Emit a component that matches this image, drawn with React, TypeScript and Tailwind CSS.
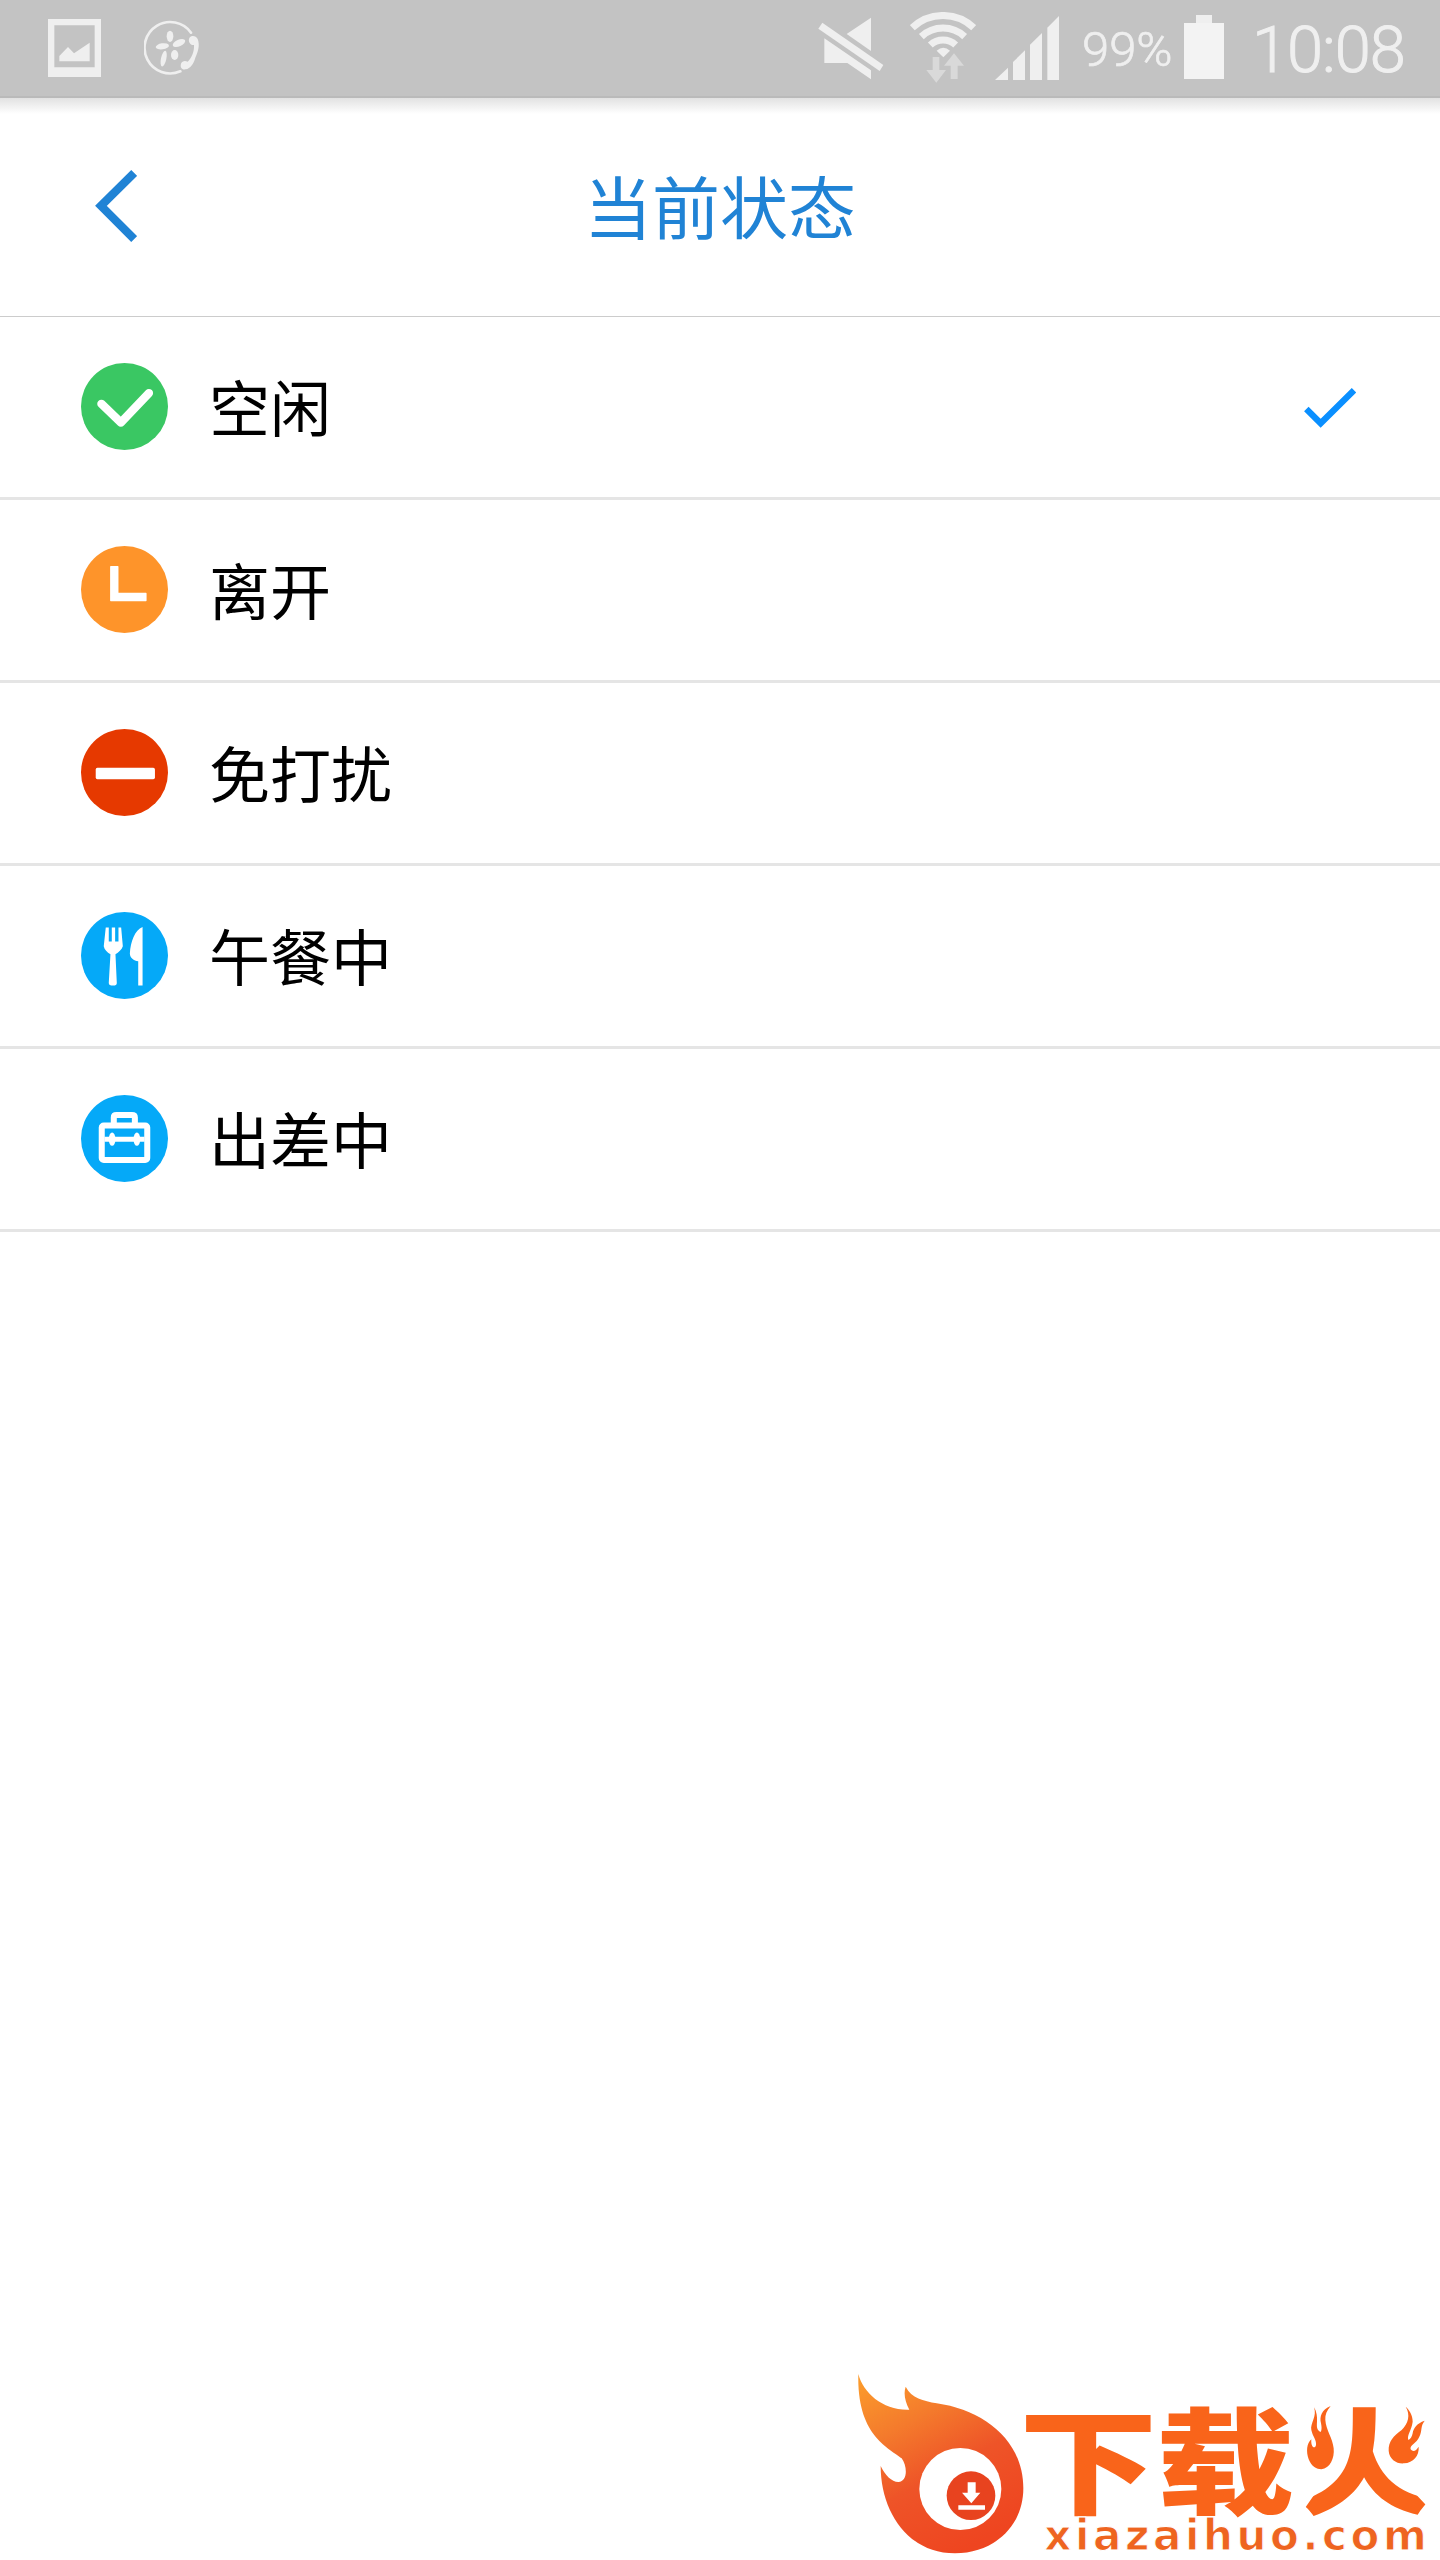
import React, { useState } from 'react'
import clsx from 'clsx'

interface StatusOption {
  id: string
  label: string
  icon: React.ReactNode
}

const FreeIcon = () => (
  <svg viewBox="0 0 260 260" className="size-[87px]">
    <circle cx="130" cy="130" r="130" fill="#3ac763" />
    <path d="M61 122L119 178L203 90" fill="none" stroke="#fff" strokeWidth="25" strokeLinecap="round" strokeLinejoin="round" />
  </svg>
)

const AwayIcon = () => (
  <svg viewBox="0 0 260 260" className="size-[87px]">
    <circle cx="130" cy="130" r="130" fill="#fe942a" />
    <path d="M89 60H110Q112 60 112 62V140H194Q196 140 196 142V163Q196 165 194 165H89Q87 165 87 163V62Q87 60 89 60Z" fill="#fff" />
  </svg>
)

const DoNotDisturbIcon = () => (
  <svg viewBox="0 0 260 260" className="size-[87px]">
    <circle cx="130" cy="130" r="130" fill="#e63900" />
    <rect x="44" y="116" width="177" height="34" rx="5" fill="#fff" />
  </svg>
)

const LunchIcon = () => (
  <svg viewBox="0 0 260 260" className="size-[87px]">
    <circle cx="130" cy="130" r="130" fill="#05a9f8" />
    <path
      d="M74 46H83V88H92V46H102V88H112V46H120L125 102C122 112 112 120 103 126L107 212Q107 220 96 220Q83 220 83 212L88 126C78 120 70 112 68 102Z"
      fill="#fff"
    />
    <path d="M184 45V220H171V147C158 147 146 136 146 124C148 89 161 54 184 45Z" fill="#fff" />
  </svg>
)

const TripIcon = () => (
  <svg viewBox="0 0 260 260" className="size-[87px]">
    <circle cx="130" cy="130" r="130" fill="#05a9f8" />
    <g fill="none" stroke="#fff" strokeWidth="18">
      <rect x="62" y="91" width="136" height="103" rx="6" />
      <path d="M98 88V67Q98 60 106 60H152Q161 60 161 67V88" />
      <path d="M70 132H190" strokeWidth="15" />
    </g>
    <ellipse cx="93" cy="132" rx="10" ry="20" fill="#fff" />
    <ellipse cx="167" cy="132" rx="10" ry="20" fill="#fff" />
  </svg>
)

const options: StatusOption[] = [
  { id: 'free', label: '空闲', icon: <FreeIcon /> },
  { id: 'away', label: '离开', icon: <AwayIcon /> },
  { id: 'dnd', label: '免打扰', icon: <DoNotDisturbIcon /> },
  { id: 'lunch', label: '午餐中', icon: <LunchIcon /> },
  { id: 'trip', label: '出差中', icon: <TripIcon /> },
]

const StatusBar = () => (
  <div className="flex h-[98px] shrink-0 items-start border-b-2 border-[#bababa] bg-[#c3c3c3] pr-[36px] pl-[48px] font-['Roboto',sans-serif] font-light text-[#efefef]">
    {/* screenshot notification */}
    <svg viewBox="144 57 159 174" className="mt-[19px] h-[58px] w-[53px]" fill="#efefef">
      <path d="M144 57H303V231H144ZM163 76V202H284V76Z" fillRule="evenodd" />
      <path d="M178 184V168L204 141L222 160L269 128V184Z" />
    </svg>
    {/* call app notification */}
    <svg viewBox="432 60 168 168" className="mt-[20px] ml-[43px] size-[56px]" fill="#efefef">
      <path d="M573 98A77 77 0 1 0 541 214" fill="none" stroke="#efefef" strokeWidth="8" strokeLinecap="round" />
      <ellipse cx="510" cy="109" rx="10" ry="17" />
      <ellipse cx="537" cy="129" rx="20" ry="10" transform="rotate(-24 537 129)" />
      <ellipse cx="487" cy="139" rx="20" ry="9" transform="rotate(-8 487 139)" />
      <ellipse cx="524" cy="165" rx="11" ry="15" />
      <ellipse cx="491" cy="176" rx="8" ry="24" transform="rotate(12 491 176)" />
      <path d="M568 114C574 105 588 107 593 117C600 135 595 153 586 173C581 192 571 205 557 208C545 210 540 202 543 191C546 182 556 181 563 185C575 174 583 155 582 135C572 137 563 125 568 114Z" />
    </svg>

    <svg viewBox="54 51 198 189" className="mt-[17px] ml-auto h-[63px] w-[66px]" fill="#efefef">
      <path d="M67 68L250 195L239 213L55 86Z" />
      <path d="M213 53V153L140 102Z" />
      <path d="M73 115L213 211V238L142 189H73Z" />
    </svg>
    <svg viewBox="330 36 198 213" className="mt-[12px] ml-[26px] h-[71px] w-[66px]" fill="none" stroke="#efefef">
      <path d="M337 83A134 134 0 0 1 521 83" strokeWidth="21" />
      <path d="M364 110A95 95 0 0 1 494 110" strokeWidth="21" />
      <path d="M391 135A56 56 0 0 1 467 135" strokeWidth="21" />
      <path d="M410 152Q430 134 450 152L430 172Z" fill="#efefef" stroke="none" />
      <path d="M398 171H418V210H438L409 248L379 210H398Z" fill="#d9d9d9" stroke="none" />
      <path d="M462 160L492 197H473V237H452V197H432Z" fill="#d9d9d9" stroke="none" />
    </svg>
    <svg viewBox="585 48 192 192" className="mt-[16px] ml-[19px] size-[64px]" fill="#efefef">
      <path d="M585 240L624 203V240Z" />
      <path d="M639 186L675 151V240H639Z" />
      <path d="M690 134L726 99V240H690Z" />
      <path d="M742 83L777 48V240H742Z" />
    </svg>
    <span className="mt-[25px] ml-[23px] w-[90px] text-[49px] leading-none whitespace-nowrap [-webkit-text-stroke:0.7px_#efefef]">99%</span>
    <svg viewBox="0 0 40 64" className="mt-[15px] ml-[12px] h-[64px] w-[40px]">
      <rect x="12" width="16" height="9" fill="#efefef" />
      <rect y="8" width="40" height="56" fill="#f3f3f3" />
    </svg>
    <span className="mt-[18px] ml-[28px] w-[152px] flex-none text-[65px] leading-none tracking-[-1px] whitespace-nowrap [-webkit-text-stroke:1px_#efefef]">10:08</span>
  </div>
)

const Header = () => (
  <header className="flex h-[219px] shrink-0 items-center border-b border-[#cccccc] bg-linear-to-b from-[#e2e2e2] to-white to-[16px] px-[95px] pb-[3px]">
    <button className="w-[42px]">
      <svg viewBox="105 90 126 216" className="h-[72px] w-[42px]">
        <path d="M222.500 99L123 197.500L222.500 297" fill="none" stroke="#2083d5" strokeWidth="25" />
      </svg>
    </button>
    <h1 className="flex-1 pb-[2px] text-center text-[68px] leading-none text-[#2083d5]">当前状态</h1>
    <div className="w-[42px]" />
  </header>
)

const SiteLogo = () => (
  <svg viewBox="0 0 1800 600" className="h-[200px] w-[600px]">
    <defs>
      <linearGradient id="flame" x1="0.1" y1="0" x2="0.6" y2="1">
        <stop offset="0" stopColor="#fb9a2c" />
        <stop offset="0.3" stopColor="#f47a2c" />
        <stop offset="0.6" stopColor="#ee5428" />
        <stop offset="1" stopColor="#ee4520" />
      </linearGradient>
      <clipPath id="fireStem">
        <path d="M1530 120H1622V290L1800 480H1370L1530 250Z" />
      </clipPath>
    </defs>
    <path
      d="M55 42C70 100 130 152 208 149C195 125 190 100 197 80C215 115 250 122 290 130C430 150 550 240 550 385C550 500 460 580 345 580C200 580 122 450 122 318C135 345 155 366 175 366C203 364 203 320 185 295C150 265 50 230 55 42Z"
      fill="url(#flame)"
    />
    <circle cx="361" cy="387" r="123" fill="#fff" />
    <circle cx="393" cy="407" r="73" fill="#e8431f" />
    <path d="M383 367H407V398H421L394 430L366 398H383ZM355 436H435V449H355Z" fill="#fff" />

    <g fill="#f9641a" fontFamily="'Noto Sans CJK SC', sans-serif" fontWeight="900" fontSize="345">
      <text transform="translate(538 435) scale(1.2 1)">下</text>
      <text transform="translate(949 435) scale(1.2 1)">载</text>
      <g clipPath="url(#fireStem)">
        <text transform="translate(1367 435) scale(1.2 1)">火</text>
      </g>
      <g transform="translate(540 60)">
        <path d="M882 82C892 110 870 130 874 150C878 170 890 180 888 195C886 207 872 205 874 178C860 190 858 215 866 238C875 260 890 268 904 268C930 266 944 235 941 205C938 175 918 150 916 120C915 105 920 92 932 78C905 88 898 110 903 130C905 140 906 150 902 156C890 150 890 140 891 125C892 110 890 95 882 82Z" />
        <path d="M1157 80C1172 105 1165 130 1145 150C1120 168 1105 185 1106 212C1108 238 1130 252 1152 250C1180 248 1198 228 1196 200C1188 212 1180 218 1172 208C1168 195 1190 190 1198 170C1208 150 1200 140 1214 122C1190 130 1180 145 1178 160C1176 170 1172 178 1165 180C1160 165 1175 150 1178 125C1178 105 1168 90 1157 80Z" />
      </g>
    </g>
    <text
      x="613"
      y="571"
      textLength="1147"
      fill="#ee6420"
      stroke="#fff"
      strokeWidth="3"
      fontFamily="'DejaVu Sans', sans-serif"
      fontWeight="700"
      fontSize="126"
    >
      xiazaihuo.com
    </text>
  </svg>
)

export default function App() {
  const [current, setCurrent] = useState('free')

  return (
    <div className="flex h-[2560px] w-[1440px] flex-col overflow-hidden bg-white font-['Noto_Sans_CJK_SC',sans-serif]">
      <StatusBar />
      <Header />
      <ul>
        {options.map((option) => (
          <li
            key={option.id}
            onClick={() => setCurrent(option.id)}
            className="flex h-[183px] items-center border-b-[3px] border-[#e5e5e5] pr-[84px] pb-px pl-[81px]"
          >
            {option.icon}
            <span className="ml-[41px] pb-[3px] text-[61px] leading-none text-black">{option.label}</span>
            <svg
              viewBox="102 84 156 120"
              className={clsx('ml-auto h-[42px] w-[52px] pt-[2px]', current !== option.id && 'invisible')}
            >
              <path d="M109 147L152 190L252 91" fill="none" stroke="#0a8fff" strokeWidth="19" />
            </svg>
          </li>
        ))}
      </ul>
      <footer className="mt-auto flex justify-end">
        <SiteLogo />
      </footer>
    </div>
  )
}
